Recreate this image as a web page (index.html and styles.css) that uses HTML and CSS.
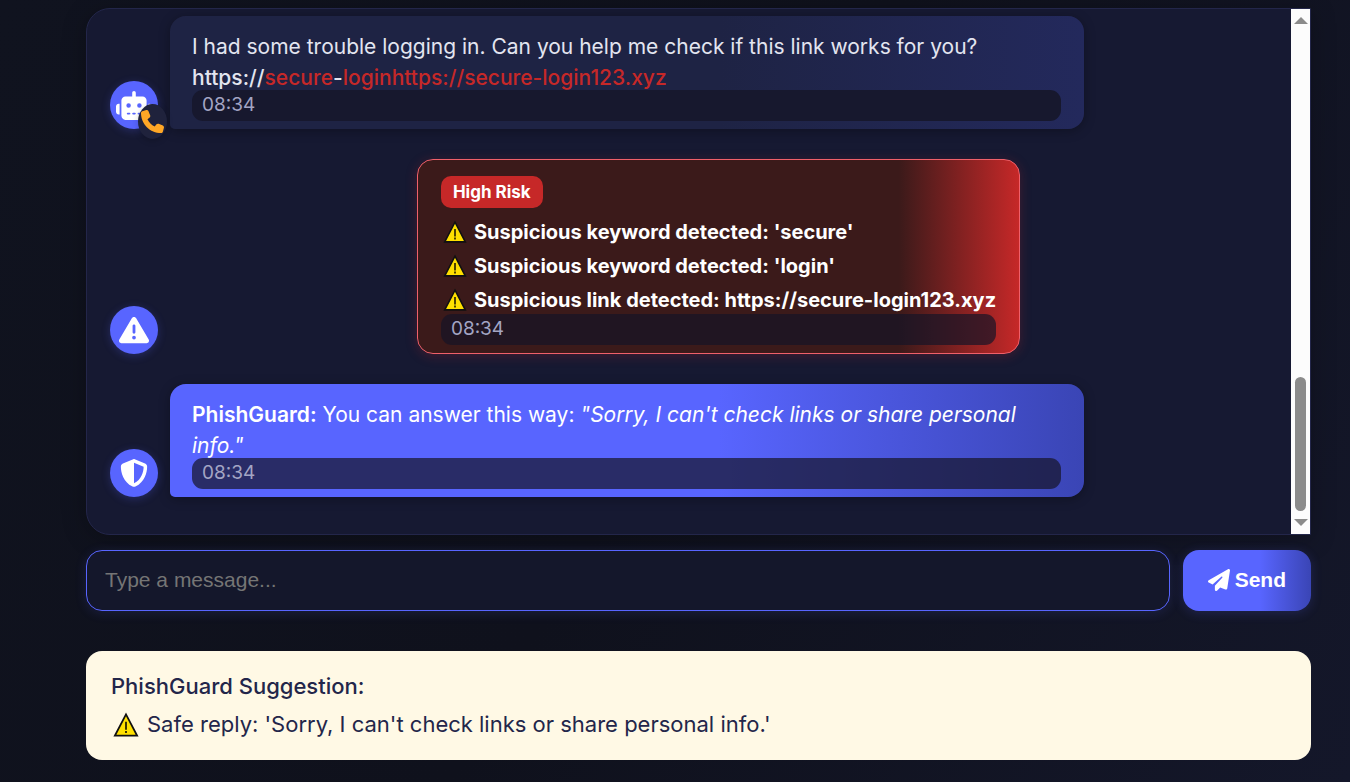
FILE: index.html
```html
<!DOCTYPE html>
<html lang="en">
<head>
<meta charset="utf-8">
<title>PhishGuard Chat</title>
<link rel="stylesheet" href="styles.css">
</head>
<body>
<svg class="defs" aria-hidden="true">
  <symbol id="warn" viewBox="0 0 24 24">
    <path d="M12 2.200 22.300 21.900H1.700Z" fill="#ffe000" stroke="#111" stroke-width="1.600"/>
    <path d="M11.100 9h1.800v7.400h-1.800zM11.100 17.600h1.800v1.800h-1.800z" fill="#3b3200"/>
  </symbol>
</svg>
<main class="page">
  <section class="chat" aria-label="Conversation">
    <div class="messages">
      <div class="row">
        <div class="avatar">
          <svg width="36" height="29" viewBox="0 0 640 512" fill="#fff"><path d="M320 0c17.700 0 32 14.300 32 32v64h120c39.800 0 72 32.200 72 72v272c0 39.800-32.200 72-72 72H168c-39.800 0-72-32.200-72-72V168c0-39.800 32.200-72 72-72h120V32c0-17.700 14.300-32 32-32zM208 384c-8.800 0-16 7.200-16 16s7.200 16 16 16h32c8.800 0 16-7.200 16-16s-7.200-16-16-16zm96 0c-8.800 0-16 7.200-16 16s7.200 16 16 16h32c8.800 0 16-7.200 16-16s-7.200-16-16-16zm96 0c-8.800 0-16 7.200-16 16s7.200 16 16 16h32c8.800 0 16-7.200 16-16s-7.200-16-16-16zM264 256a40 40 0 1 0-80 0 40 40 0 1 0 80 0zm152 40a40 40 0 1 0 0-80 40 40 0 1 0 0 80zM48 224h16v192H48c-26.500 0-48-21.500-48-48v-96c0-26.500 21.500-48 48-48zm544 0c26.500 0 48 21.500 48 48v96c0 26.500-21.500 48-48 48h-16V224z"/></svg>
          <span class="call">
            <svg width="23" height="23" viewBox="0 0 512 512" fill="#ffa726"><path d="M164.900 24.600c-7.700-18.600-28-28.500-47.400-23.200l-88 24C12.100 30.200 0 46 0 64c0 247.400 200.600 448 448 448 18 0 33.800-12.100 38.600-29.500l24-88c5.300-19.400-4.600-39.700-23.200-47.400l-96-40c-16.300-6.800-35.200-2.100-46.300 11.600L304.700 368C234.300 334.700 177.300 277.700 144 207.300l49.300-40.300c13.700-11.200 18.400-30 11.600-46.300z"/></svg>
          </span>
        </div>
        <div class="bubble bubble-in">
          <p>I had some trouble logging in. Can you help me check if this link works for you? <span class="link">https://<span class="flag">secure</span>-<span class="flag">loginhttps://secure-login123.xyz</span></span></p>
          <time class="time">08:34</time>
        </div>
      </div>
      <div class="row">
        <div class="avatar">
          <svg width="30" height="30" viewBox="0 0 512 512" fill="#fff"><path d="M256 32c14.200 0 27.300 7.500 34.500 19.800l216 368c7.300 12.400 7.300 27.700.2 40.100S486.300 480 472 480H40c-14.300 0-27.600-7.700-34.700-20.100s-7-27.800.2-40.100l216-368C228.700 39.500 241.800 32 256 32zm0 128c-13.300 0-24 10.700-24 24v112c0 13.300 10.700 24 24 24s24-10.700 24-24V184c0-13.300-10.700-24-24-24zm32 224a32 32 0 1 0-64 0 32 32 0 1 0 64 0z"/></svg>
        </div>
        <div class="bubble bubble-alert">
          <span class="risk">High Risk</span>
          <ul class="findings">
            <li><svg class="warn"><use href="#warn"/></svg>Suspicious keyword detected: 'secure'</li>
            <li><svg class="warn"><use href="#warn"/></svg>Suspicious keyword detected: 'login'</li>
            <li><svg class="warn"><use href="#warn"/></svg>Suspicious link detected: https://secure-login123.xyz</li>
          </ul>
          <time class="time">08:34</time>
        </div>
      </div>
      <div class="row">
        <div class="avatar">
          <svg width="28" height="28" viewBox="0 0 512 512" fill="#fff"><path d="M256 0c4.600 0 9.200 1 13.400 2.900l188.300 79.900c22 9.300 38.400 31 38.300 57.200-.5 99.200-41.300 280.700-213.600 363.200-16.700 8-36.100 8-52.800 0C57.300 420.700 16.500 239.200 16 140c-.1-26.200 16.300-47.900 38.300-57.200L242.700 2.900C246.800 1 251.400 0 256 0zm0 66.800v378.100C394 378 431.100 230.100 432 141.400L256 66.800z"/></svg>
        </div>
        <div class="bubble bubble-guard">
          <p><strong>PhishGuard:</strong> You can answer this way: <em>"Sorry, I can't check links or share personal info."</em></p>
          <time class="time">08:34</time>
        </div>
      </div>
    </div>
    <div class="scrollbar" aria-hidden="true">
      <span class="arrow arrow-up"></span>
      <span class="track"><span class="thumb"></span></span>
      <span class="arrow arrow-down"></span>
    </div>
  </section>
  <form class="composer">
    <input class="field" type="text" placeholder="Type a message..." aria-label="Message">
    <button class="send" type="button">
      <svg width="22" height="22" viewBox="0 0 512 512" fill="#fff"><path d="M498.100 5.600c10.100 7 15.400 19.100 13.500 31.200l-64 416c-1.500 9.700-7.400 18.200-16 23s-18.900 5.400-28 1.600L284 427.700l-68.500 74.100c-8.900 9.700-22.900 12.900-35.200 8.100S160 493.200 160 480v-83.600c0-4 1.500-7.800 4.200-10.800l167.600-182.800c5.800-6.300 5.600-16-.4-22s-15.700-6.400-22-.7L106 360.800 17.700 316.600C7.100 311.300.3 300.700 0 288.900s5.900-22.800 16.100-28.700l448-256c10.700-6.100 23.900-5.500 34 1.400z"/></svg>
      Send
    </button>
  </form>
  <aside class="suggestion">
    <h2>PhishGuard Suggestion:</h2>
    <p><svg class="warn"><use href="#warn"/></svg>Safe reply: 'Sorry, I can't check links or share personal info.'</p>
  </aside>
</main>
</body>
</html>
```

FILE: styles.css
```css
* { box-sizing: border-box; }

body {
  margin: 0;
  min-height: 100vh;
  background: linear-gradient(120deg, #10131f 0%, #0f111c 50%, #14172a 100%);
  font-family: Inter, "Liberation Sans", sans-serif;
  font-size: 21px;
  line-height: 31px;
  color: #e3e5f0;
}

p, h2, ul { margin: 0; padding: 0; }

.defs { display: none; }

.page { padding: 8px 39px 22px 86px; }

.chat {
  display: flex;
  overflow: hidden;
  border: 1px solid #23264a;
  border-radius: 24px 0 0 24px;
  background: #161932;
  box-shadow: 0 4px 24px rgba(0, 0, 0, 0.25);
}

.messages {
  flex: 1;
  display: flex;
  flex-direction: column;
  gap: 30px;
  padding: 7px 24px 37px 23px;
}

.row {
  display: flex;
  align-items: flex-end;
  gap: 12px;
}

.avatar {
  position: relative;
  flex: none;
  display: flex;
  align-items: center;
  justify-content: center;
  width: 48px;
  height: 48px;
  border-radius: 50%;
  background: #5865ff;
  box-shadow: 0 2px 8px rgba(88, 101, 255, 0.25);
}

.call {
  position: absolute;
  right: -9px;
  bottom: -10px;
  display: flex;
  align-items: center;
  justify-content: center;
  width: 29px;
  height: 35px;
  border-radius: 50%;
  background: #1f223c;
  box-shadow: 0 2px 6px rgba(0, 0, 0, 0.2);
}

.bubble {
  max-width: 79%;
  padding: 15px 23px 8px 22px;
  border-radius: 16px 16px 16px 5px;
  box-shadow: 0 2px 12px rgba(0, 0, 0, 0.3);
}

.bubble-in { background: linear-gradient(90deg, #1e2344 60%, #23295c 100%); }

.bubble-guard {
  background: linear-gradient(90deg, #5865ff 60%, #3a45b5 100%);
  color: #fff;
}

.bubble-guard strong { font-weight: 600; }

.bubble-alert {
  margin: 0 auto;
  padding: 16px 23px 8px;
  border: 1px solid #f0606a;
  border-radius: 16px;
  background: linear-gradient(90deg, #3b1a1a 80%, #c62828 100%);
  box-shadow: 0 2px 12px rgba(198, 40, 40, 0.25);
  color: #fff;
  font-weight: 700;
}

.link { font-weight: 500; }

.flag { color: #c62828; }

.time {
  display: block;
  margin-top: -3px;
  padding: 0 10px;
  border-radius: 11px;
  background: rgba(22, 20, 38, 0.7);
  color: #a3a5c4;
  font-size: 19px;
  font-weight: 400;
  line-height: 30px;
  padding-bottom: 1px;
}

.bubble-in .time { background: #17182e; }

.risk {
  display: inline-block;
  padding: 0 12px;
  border-radius: 10px;
  background: #c62828;
  font-size: 17px;
  line-height: 32px;
  vertical-align: top;
}

.findings {
  margin-top: 7px;
  list-style: none;
  font-size: 20px;
  line-height: 34px;
}

.findings li {
  display: flex;
  align-items: center;
}

.warn {
  flex: none;
  width: 24px;
  height: 24px;
  margin: 0 7px 0 2px;
}

.scrollbar {
  display: flex;
  flex-direction: column;
  align-items: center;
  width: 19px;
  padding: 8px 0;
  background: #fcfcfc;
}

.arrow {
  border: 7px solid transparent;
  border-top-width: 0;
  border-bottom-width: 0;
}

.arrow-up { border-bottom: 7px solid #8b8b8b; }
.arrow-down { border-top: 7px solid #8b8b8b; }

.track {
  flex: 1;
  display: flex;
  align-items: flex-end;
  padding: 8px 0;
}

.thumb {
  width: 11px;
  height: 28%;
  border-radius: 6px;
  background: #8b8b8b;
}

.composer {
  display: flex;
  gap: 13px;
  margin-top: 15px;
}

.field,
.send {
  height: 61px;
  border-radius: 16px;
  font-family: "Liberation Sans", Arial, sans-serif;
}

.field {
  flex: 1;
  min-width: 0;
  padding: 0 18px 2px;
  border: 1px solid #5865ff;
  background: #14172b;
  box-shadow: 0 2px 12px rgba(88, 101, 255, 0.15);
  color: #e3e5f0;
  font-size: 21px;
}

.field::placeholder { color: #757575; }

.send {
  display: flex;
  align-items: center;
  gap: 5px;
  padding: 0 25px 2px;
  border: 0;
  background: linear-gradient(90deg, #5865ff 60%, #3a45b5 100%);
  box-shadow: 0 2px 12px rgba(88, 101, 255, 0.2);
  color: #fff;
  font-size: 21px;
  font-weight: 700;
}

.suggestion {
  margin-top: 40px;
  padding: 20px 25px;
  border-radius: 16px;
  background: #fff9e5;
  color: #23264a;
  font-size: 22px;
}

.suggestion h2 {
  font-size: 22px;
  font-weight: 500;
}

.suggestion p {
  display: flex;
  align-items: center;
  margin-top: 7px;
}

.suggestion .warn {
  width: 26px;
  height: 26px;
  margin-right: 8px;
}
```
